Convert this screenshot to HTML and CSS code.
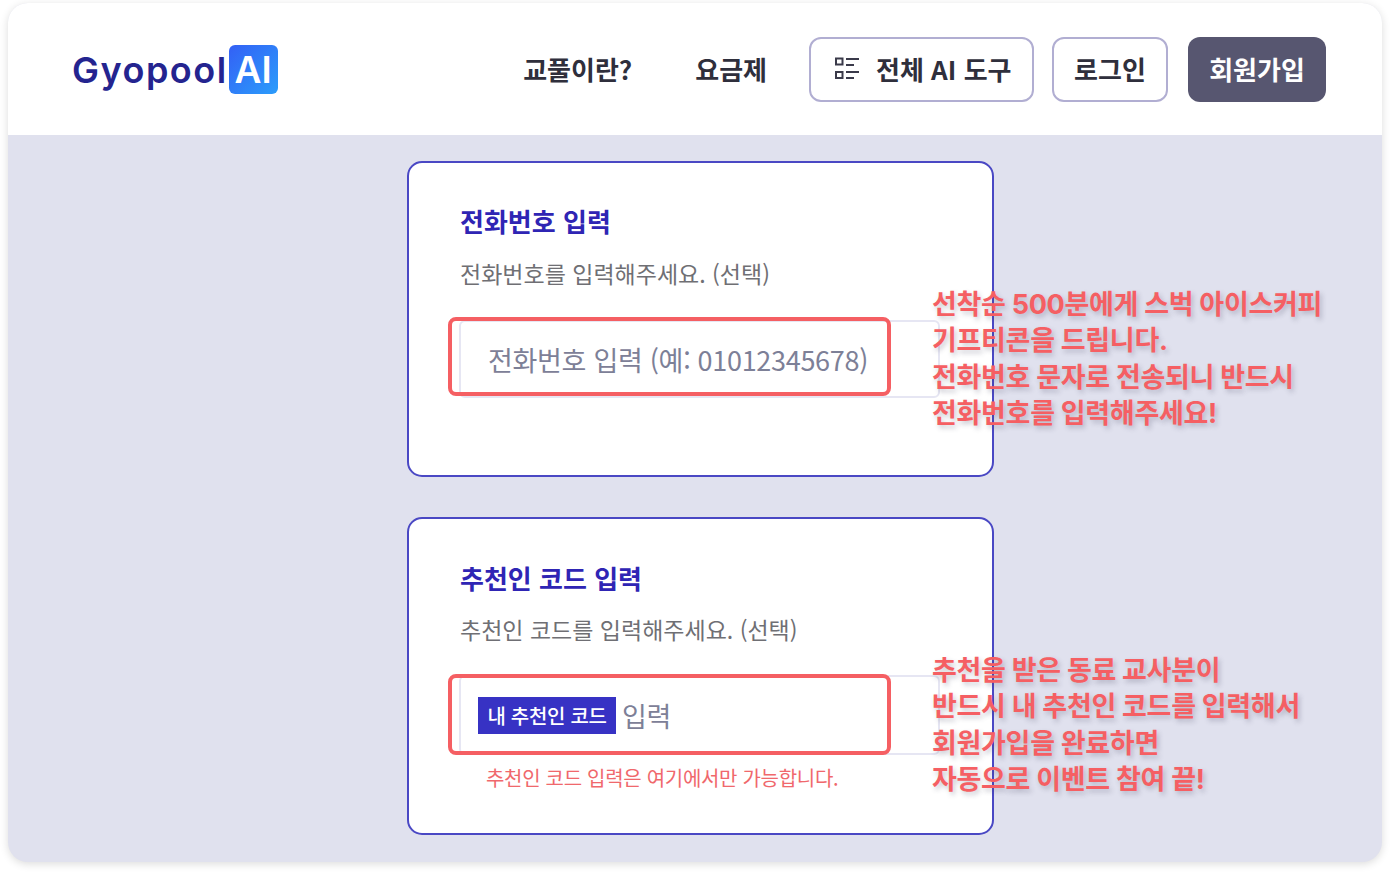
FILE: index.html
```html
<!DOCTYPE html>
<html lang="ko">
<head>
  <meta charset="UTF-8" />
  <title>GyopoolAI 회원가입</title>
  <link rel="stylesheet" href="styles.css">
</head>
<body>
  <div class="frame">
    <!-- Header -->
    <header class="header">
      <a href="#" class="logo">
        <span class="logo-word">Gyopool</span>
        <span class="logo-badge">AI</span>
      </a>
      <nav class="nav">
        <a href="#" class="nav-link nav-about">교풀이란?</a>
        <a href="#" class="nav-link nav-price">요금제</a>
        <a href="#" class="btn btn-tools">
          <svg class="tools-icon" width="26" height="23" viewBox="0 0 26 23" fill="none" stroke="#3a3a4a" stroke-width="2">
            <rect x="2" y="1.5" width="6.5" height="6"/>
            <rect x="2" y="15" width="6.5" height="6"/>
            <path d="M12 2h13M12 8h8M12 15h13M12 21h8"/>
          </svg>
          전체 AI 도구
        </a>
        <a href="#" class="btn btn-login">로그인</a>
        <a href="#" class="btn btn-join">회원가입</a>
      </nav>
    </header>

    <!-- Form cards -->
    <main class="content">
      <section class="card card-phone">
        <h2>전화번호 입력</h2>
        <p class="desc">전화번호를 입력해주세요. (선택)</p>
        <div class="field">
          <span class="placeholder">전화번호 입력 (예: 01012345678)</span>
        </div>
        <div class="highlight"></div>
      </section>

      <section class="card card-code">
        <h2>추천인 코드 입력</h2>
        <p class="desc">추천인 코드를 입력해주세요. (선택)</p>
        <div class="field">
          <mark class="code-tag">내 추천인 코드</mark>
          <span class="placeholder">입력</span>
        </div>
        <div class="highlight"></div>
        <p class="hint">추천인 코드 입력은 여기에서만 가능합니다.</p>
      </section>

      <!-- Annotations over the cards -->
      <p class="note note-phone">선착순 500분에게 스벅 아이스커피<br>기프티콘을 드립니다.<br>전화번호 문자로 전송되니 반드시<br>전화번호를 입력해주세요!</p>
      <p class="note note-code">추천을 받은 동료 교사분이<br>반드시 내 추천인 코드를 입력해서<br>회원가입을 완료하면<br>자동으로 이벤트 참여 끝!</p>
    </main>
  </div>
</body>
</html>
```

FILE: styles.css
```css
* {
  margin: 0;
  padding: 0;
  box-sizing: border-box;
  font-family: "Noto Sans CJK KR", "Noto Sans", sans-serif;
}
html, body {
  height: 100%;
  overflow: hidden;
}
body {
  background: #ffffff;
  padding: 3px 8px 12px;
}
a {
  text-decoration: none;
  color: inherit;
}
.frame {
  height: 859px;
  background: #e0e1ee;
  border-radius: 20px;
  overflow: hidden;
  box-shadow: 0 2px 8px rgba(0, 0, 0, 0.14);
}

/* Header */
.header {
  height: 132px;
  background: #ffffff;
  display: flex;
  align-items: center;
  justify-content: space-between;
  padding: 1px 56px 0 64px;
}
.logo {
  display: flex;
  align-items: center;
  gap: 1px;
}
.logo-word {
  font-family: Inter, sans-serif;
  font-size: 36px;
  font-weight: 600;
  letter-spacing: 1.5px;
  color: #24248f;
  line-height: 50px;
}
.logo-badge {
  width: 49px;
  height: 49px;
  border-radius: 6px;
  background: linear-gradient(135deg, #3360f5, #2b9dfb);
  color: #ffffff;
  font-family: Inter, sans-serif;
  font-size: 37px;
  font-weight: 600;
  line-height: 49px;
  text-align: center;
}
.nav {
  display: flex;
  align-items: center;
  color: #2f2f3c;
  font-size: 26px;
  font-weight: 700;
}
.nav-link {
  padding-bottom: 2px;
}
.nav-about {
  margin-right: 63px;
}
.nav-price {
  margin-right: 42px;
}
.btn {
  height: 65px;
  display: flex;
  align-items: center;
  border-radius: 12px;
  padding-bottom: 2px;
}
.btn-tools, .btn-login {
  background: #ffffff;
  border: 2px solid #b1aed2;
}
.btn-tools {
  width: 225px;
  padding-left: 23px;
  margin-right: 18px;
}
.tools-icon {
  margin-right: 16px;
}
.btn-login {
  width: 116px;
  justify-content: center;
  margin-right: 20px;
}
.btn-join {
  width: 138px;
  justify-content: center;
  background: #575670;
  color: #ffffff;
}

/* Cards */
.content {
  position: relative;
  width: 587px;
  margin-left: 399px;
  padding-top: 26px;
  display: flex;
  flex-direction: column;
  gap: 40px;
}
.card {
  position: relative;
  background: #ffffff;
  border: 2px solid #4a48c4;
  border-radius: 15px;
  padding: 0 51px;
}
.card-phone {
  height: 316px;
}
.card-code {
  height: 318px;
}
.card h2 {
  font-size: 26px;
  font-weight: 700;
  line-height: 36px;
  color: #2f25b4;
  padding-top: 40px;
  box-sizing: content-box;
}
.card-code h2 {
  padding-top: 41px;
}
.desc {
  font-size: 23px;
  line-height: 32px;
  color: #6f6f74;
  margin-top: 18px;
}
.card-code .desc {
  margin-top: 17px;
}
.field {
  width: 481px;
  height: 78px;
  display: flex;
  align-items: center;
  border: 2px solid #e6e6f3;
  border-radius: 6px;
  padding-left: 17px;
  margin-top: 31px;
  margin-left: -1px;
}
.card-code .field {
  height: 80px;
  margin-top: 30px;
}
.placeholder {
  font-size: 27px;
  letter-spacing: -0.3px;
  color: #7d8097;
  padding-left: 10px;
}
.code-tag {
  height: 37px;
  width: 138px;
  background: #3732c4;
  color: #ffffff;
  font-size: 20px;
  font-weight: 500;
  letter-spacing: -0.3px;
  line-height: 37px;
  text-align: center;
}
.card-code .placeholder {
  padding-left: 6px;
}
.highlight {
  position: absolute;
  left: 39px;
  top: 154px;
  width: 443px;
  height: 79px;
  border: 4px solid #f55f63;
  border-radius: 8px;
}
.card-code .highlight {
  top: 155px;
  height: 81px;
}
.hint {
  font-size: 20px;
  line-height: 28px;
  letter-spacing: -0.3px;
  color: #f0686c;
  padding-left: 26px;
  margin-top: 9px;
}
.note {
  position: absolute;
  left: 525px;
  width: 420px;
  font-family: Inter, "Noto Sans CJK KR", sans-serif;
  font-size: 27px;
  font-weight: 700;
  line-height: 36.3px;
  letter-spacing: -0.3px;
  color: #f55f63;
  text-shadow: 2px 3px 5px rgba(60, 60, 90, 0.28);
  white-space: nowrap;
}
.note-phone {
  top: 152px;
}
.note-code {
  top: 518px;
}
```
